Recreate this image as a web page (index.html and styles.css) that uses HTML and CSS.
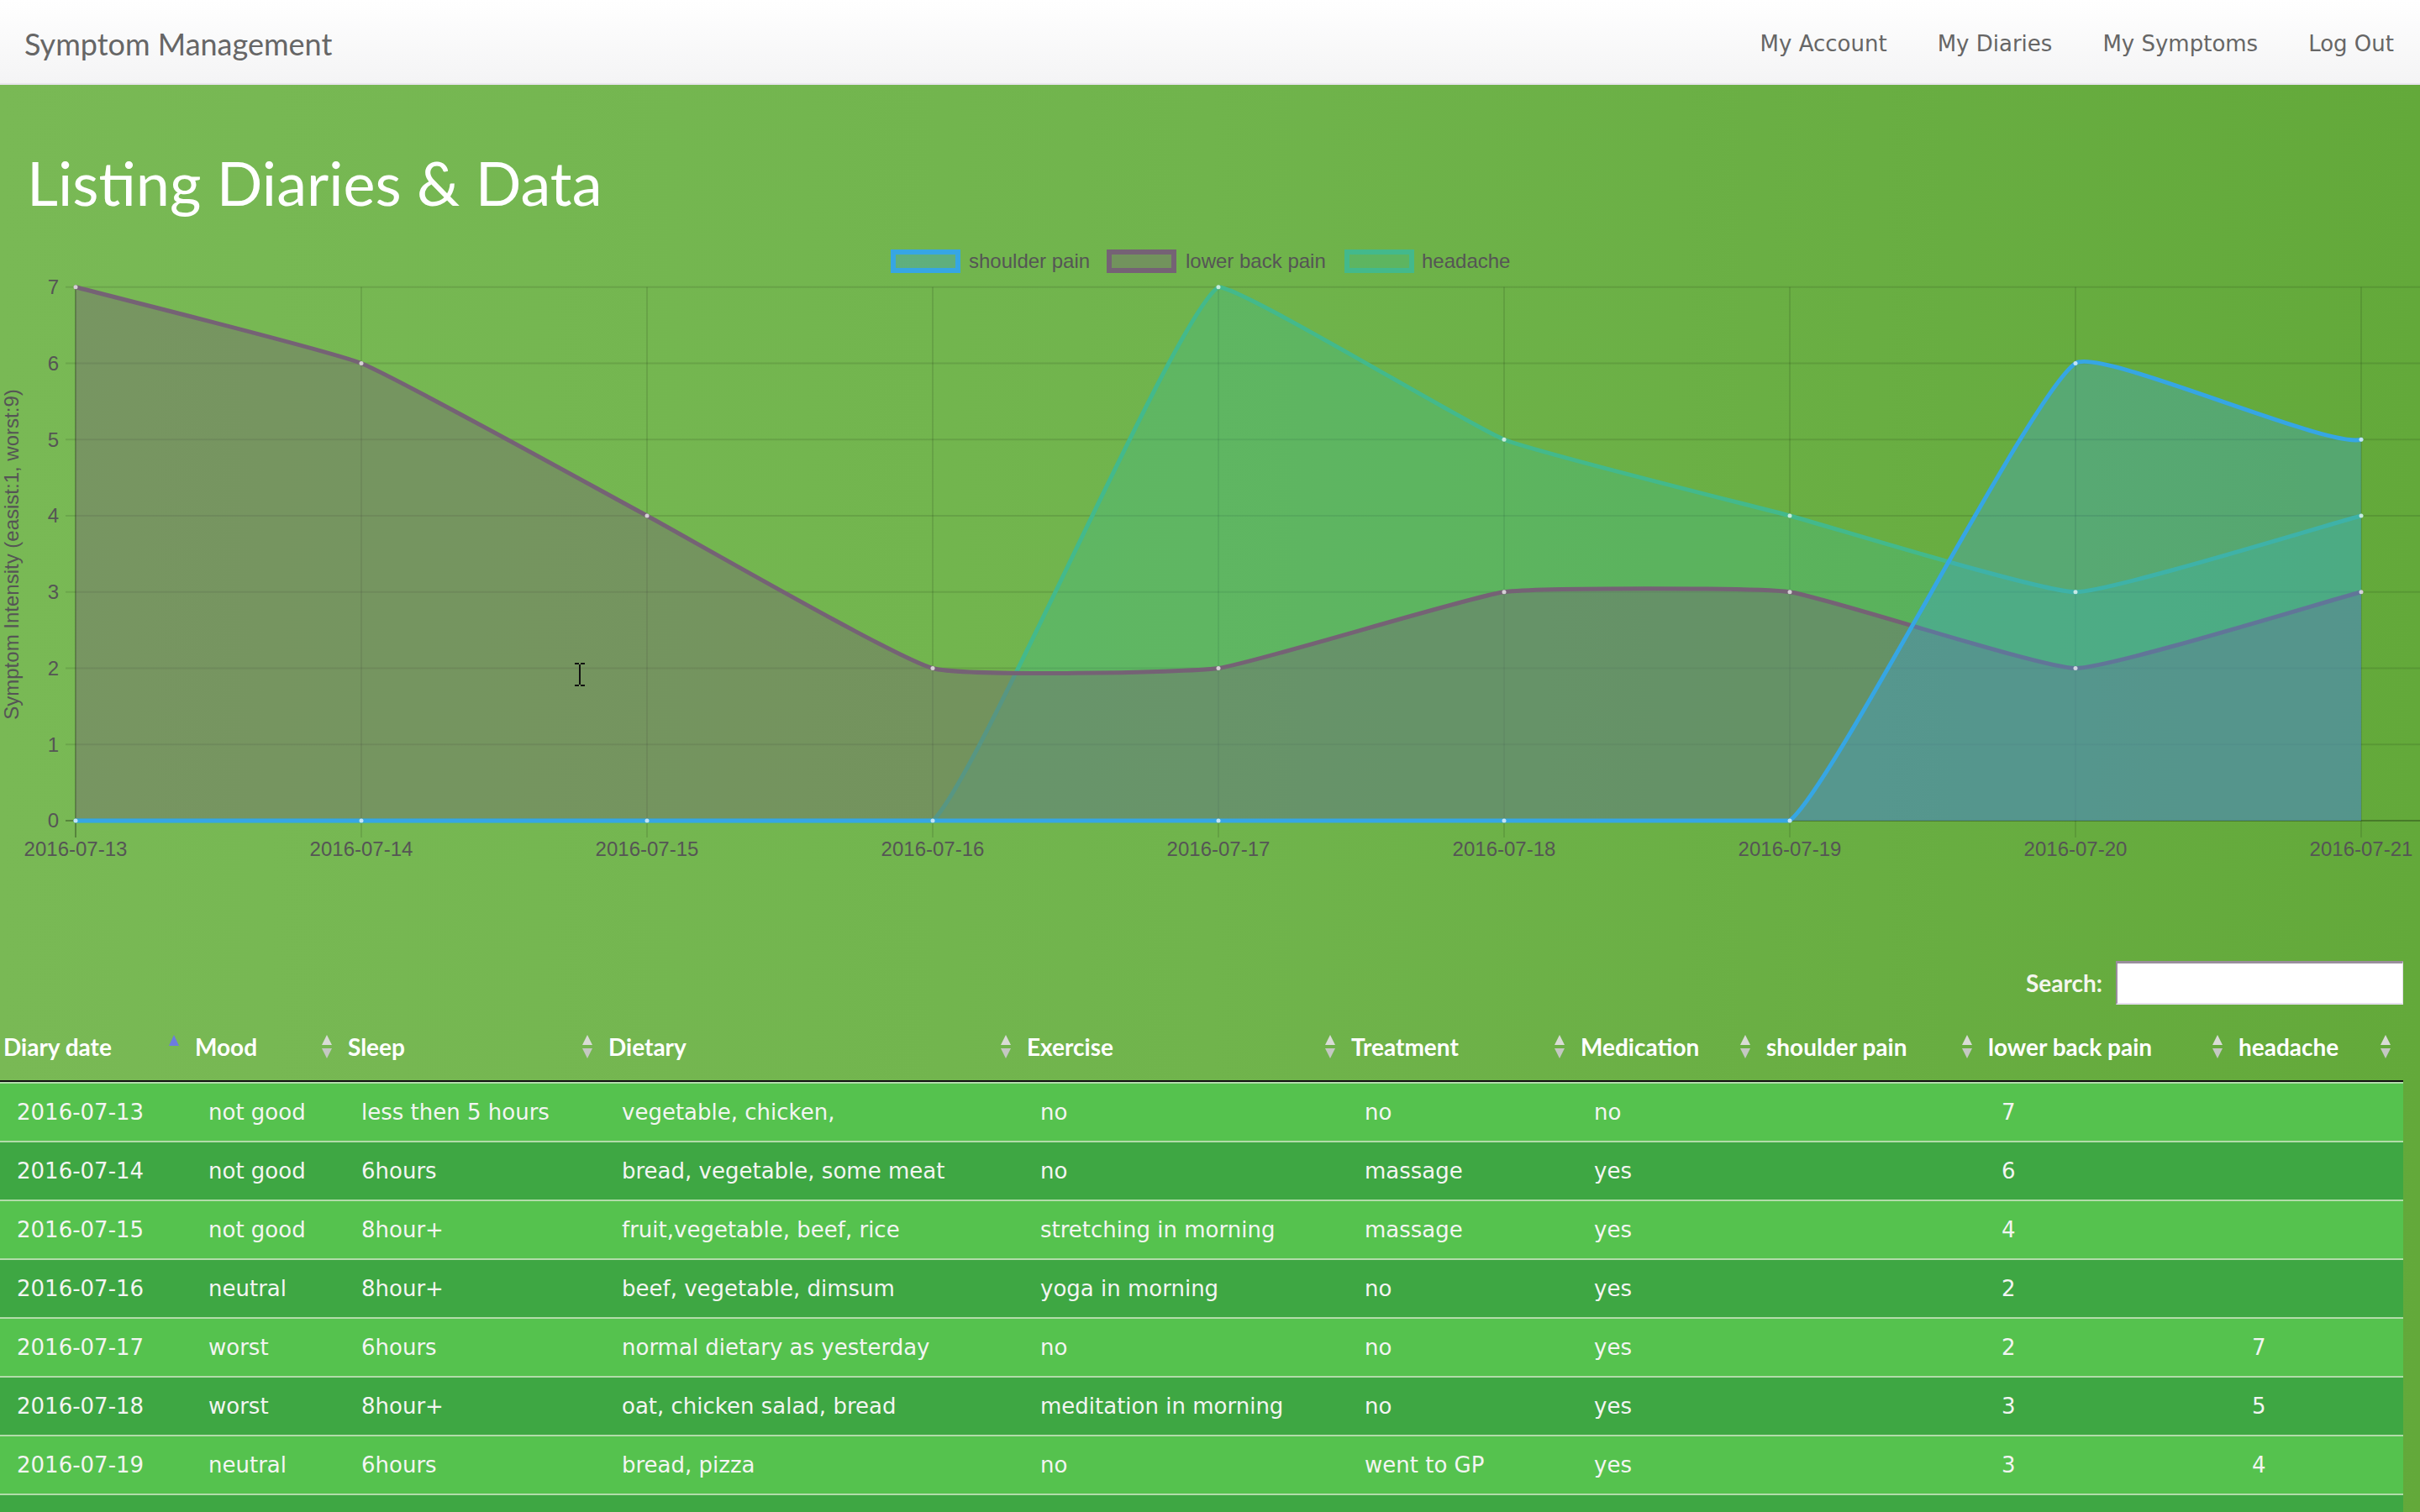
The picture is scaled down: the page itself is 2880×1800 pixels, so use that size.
FILE: index.html
```html
<!DOCTYPE html>
<html lang="en">
<head>
<meta charset="utf-8">
<title>Symptom Management</title>
<link rel="stylesheet" href="styles.css">
</head>
<body>
<nav class="navbar">
  <div class="brand">Symptom Management</div>
  <ul class="nav-links">
    <li>My Account</li>
    <li>My Diaries</li>
    <li>My Symptoms</li>
    <li>Log Out</li>
  </ul>
</nav>
<main class="page">
  <h1 class="title">Listing Diaries &amp; Data</h1>

  <svg class="chart" width="2880" height="823" viewBox="0 257 2880 823" xmlns="http://www.w3.org/2000/svg">
    <!-- legend -->
    <g class="legend">
      <rect x="1063" y="300" width="77" height="22" fill="rgba(54,162,235,0.3)" stroke="#36a6e4" stroke-width="6"/>
      <text x="1153" y="319">shoulder pain</text>
      <rect x="1320" y="300" width="77" height="22" fill="rgba(117,98,117,0.4)" stroke="#756275" stroke-width="6"/>
      <text x="1411" y="319">lower back pain</text>
      <rect x="1603" y="300" width="77" height="22" fill="rgba(64,187,140,0.35)" stroke="#43b98c" stroke-width="6"/>
      <text x="1692" y="319">headache</text>
    </g>
    <!-- grid -->
    <g class="grid">
      <line x1="78" y1="341.75" x2="2880" y2="341.75"/>
      <line x1="78" y1="432.5" x2="2880" y2="432.5"/>
      <line x1="78" y1="523.25" x2="2880" y2="523.25"/>
      <line x1="78" y1="614" x2="2880" y2="614"/>
      <line x1="78" y1="704.75" x2="2880" y2="704.75"/>
      <line x1="78" y1="795.5" x2="2880" y2="795.5"/>
      <line x1="78" y1="886.25" x2="2880" y2="886.25"/>
      <line x1="430" y1="341.75" x2="430" y2="997"/>
      <line x1="770" y1="341.75" x2="770" y2="997"/>
      <line x1="1110" y1="341.75" x2="1110" y2="997"/>
      <line x1="1450" y1="341.75" x2="1450" y2="997"/>
      <line x1="1790" y1="341.75" x2="1790" y2="997"/>
      <line x1="2130" y1="341.75" x2="2130" y2="997"/>
      <line x1="2470" y1="341.75" x2="2470" y2="997"/>
      <line x1="2810" y1="341.75" x2="2810" y2="997"/>
    </g>
    <g class="axis">
      <line x1="78" y1="977" x2="2880" y2="977"/>
      <line x1="90" y1="341.75" x2="90" y2="997"/>
    </g>
    <!-- y ticks -->
    <g class="yticks">
      <text x="70" y="350">7</text>
      <text x="70" y="441">6</text>
      <text x="70" y="532">5</text>
      <text x="70" y="622">4</text>
      <text x="70" y="713">3</text>
      <text x="70" y="804">2</text>
      <text x="70" y="895">1</text>
      <text x="70" y="985">0</text>
    </g>
    <text class="ytitle" transform="translate(22,660) rotate(-90)">Symptom Intensity (easist:1, worst:9)</text>
    <!-- x ticks -->
    <g class="xticks">
      <text x="90" y="1019">2016-07-13</text>
      <text x="430" y="1019">2016-07-14</text>
      <text x="770" y="1019">2016-07-15</text>
      <text x="1110" y="1019">2016-07-16</text>
      <text x="1450" y="1019">2016-07-17</text>
      <text x="1790" y="1019">2016-07-18</text>
      <text x="2130" y="1019">2016-07-19</text>
      <text x="2470" y="1019">2016-07-20</text>
      <text x="2810" y="1019">2016-07-21</text>
    </g>
    <!-- headache -->
    <path class="fill-headache" d="M90,977 L1110,977 C1165.44,925.19 1396.84,377.21 1450,341.75 C1478.44,341.75 1747.34,506.18 1790,523.25 C1828.94,538.85 2089.2,603.11 2130,614 C2170.8,624.89 2429.2,704.75 2470,704.75 C2510.8,704.75 2769.2,624.89 2810,614 L2810,977 Z"/>
    <path class="line line-headache" d="M90,977 L1110,977 C1165.44,925.19 1396.84,377.21 1450,341.75 C1478.44,341.75 1747.34,506.18 1790,523.25 C1828.94,538.85 2089.2,603.11 2130,614 C2170.8,624.89 2429.2,704.75 2470,704.75 C2510.8,704.75 2769.2,624.89 2810,614"/>
    <!-- lower back pain -->
    <path class="fill-back" d="M90,341.75 C130.8,352.64 391.06,416.91 430,432.5 C472.66,449.57 729.2,592.22 770,614 C810.8,635.78 1066.65,783.93 1110,795.5 C1148.25,805.71 1409.89,800.85 1450,795.5 C1491.49,789.96 1748.51,710.29 1790,704.75 C1830.11,699.4 2089.89,699.4 2130,704.75 C2171.49,710.29 2429.2,795.5 2470,795.5 C2510.8,795.5 2769.2,715.64 2810,704.75 L2810,977 L90,977 Z"/>
    <path class="line line-back" d="M90,341.75 C130.8,352.64 391.06,416.91 430,432.5 C472.66,449.57 729.2,592.22 770,614 C810.8,635.78 1066.65,783.93 1110,795.5 C1148.25,805.71 1409.89,800.85 1450,795.5 C1491.49,789.96 1748.51,710.29 1790,704.75 C1830.11,699.4 2089.89,699.4 2130,704.75 C2171.49,710.29 2429.2,795.5 2470,795.5 C2510.8,795.5 2769.2,715.64 2810,704.75"/>
    <!-- shoulder pain -->
    <path class="fill-shoulder" d="M90,977 L2130,977 C2183.34,934.28 2417.29,467.66 2470,432.5 C2498.89,413.21 2769.2,534.14 2810,523.25 L2810,977 Z"/>
    <path class="line line-shoulder" d="M90,977 L2130,977 C2183.34,934.28 2417.29,467.66 2470,432.5 C2498.89,413.21 2769.2,534.14 2810,523.25"/>
    <!-- points -->
    <g class="points">
      <circle cx="1450" cy="341.75" r="2.5"/><circle cx="1790" cy="523.25" r="2.5"/><circle cx="2130" cy="614" r="2.5"/><circle cx="2470" cy="704.75" r="2.5"/><circle cx="2810" cy="614" r="2.5"/>
      <circle cx="90" cy="341.75" r="2.5"/><circle cx="430" cy="432.5" r="2.5"/><circle cx="770" cy="614" r="2.5"/><circle cx="1110" cy="795.5" r="2.5"/><circle cx="1450" cy="795.5" r="2.5"/><circle cx="1790" cy="704.75" r="2.5"/><circle cx="2130" cy="704.75" r="2.5"/><circle cx="2470" cy="795.5" r="2.5"/><circle cx="2810" cy="704.75" r="2.5"/>
      <circle cx="90" cy="977" r="2.5"/><circle cx="430" cy="977" r="2.5"/><circle cx="770" cy="977" r="2.5"/><circle cx="1110" cy="977" r="2.5"/><circle cx="1450" cy="977" r="2.5"/><circle cx="1790" cy="977" r="2.5"/><circle cx="2130" cy="977" r="2.5"/><circle cx="2470" cy="432.5" r="2.5"/><circle cx="2810" cy="523.25" r="2.5"/>
    </g>
    <!-- mouse cursor (I-beam) -->
    <path class="cursor" d="M684,790 H689 M691,790 H696 M690,791 V815 M684,816 H689 M691,816 H696"/>
  </svg>

  <div class="filter">
    <label for="search">Search:</label>
    <input id="search" type="search">
  </div>

  <table class="diary">
    <colgroup>
      <col class="c-date"><col class="c-mood"><col class="c-sleep"><col class="c-diet"><col class="c-ex"><col class="c-treat"><col class="c-med"><col class="c-sh"><col class="c-back"><col class="c-head">
    </colgroup>
    <thead>
      <tr>
        <th><div class="th-in"><span>Diary date</span><svg class="sort" viewBox="0 0 14 30"><path class="asc" d="M7,1 L13,14 L1,14 Z"/></svg></div></th>
        <th><div class="th-in"><span>Mood</span><svg class="sort" viewBox="0 0 14 30"><path class="up" d="M7,1 L13,13 L1,13 Z"/><path class="down" d="M1,17 L13,17 L7,29 Z"/></svg></div></th>
        <th><div class="th-in"><span>Sleep</span><svg class="sort" viewBox="0 0 14 30"><path class="up" d="M7,1 L13,13 L1,13 Z"/><path class="down" d="M1,17 L13,17 L7,29 Z"/></svg></div></th>
        <th><div class="th-in"><span>Dietary</span><svg class="sort" viewBox="0 0 14 30"><path class="up" d="M7,1 L13,13 L1,13 Z"/><path class="down" d="M1,17 L13,17 L7,29 Z"/></svg></div></th>
        <th><div class="th-in"><span>Exercise</span><svg class="sort" viewBox="0 0 14 30"><path class="up" d="M7,1 L13,13 L1,13 Z"/><path class="down" d="M1,17 L13,17 L7,29 Z"/></svg></div></th>
        <th><div class="th-in"><span>Treatment</span><svg class="sort" viewBox="0 0 14 30"><path class="up" d="M7,1 L13,13 L1,13 Z"/><path class="down" d="M1,17 L13,17 L7,29 Z"/></svg></div></th>
        <th><div class="th-in"><span>Medication</span><svg class="sort" viewBox="0 0 14 30"><path class="up" d="M7,1 L13,13 L1,13 Z"/><path class="down" d="M1,17 L13,17 L7,29 Z"/></svg></div></th>
        <th><div class="th-in"><span>shoulder pain</span><svg class="sort" viewBox="0 0 14 30"><path class="up" d="M7,1 L13,13 L1,13 Z"/><path class="down" d="M1,17 L13,17 L7,29 Z"/></svg></div></th>
        <th><div class="th-in"><span>lower back pain</span><svg class="sort" viewBox="0 0 14 30"><path class="up" d="M7,1 L13,13 L1,13 Z"/><path class="down" d="M1,17 L13,17 L7,29 Z"/></svg></div></th>
        <th><div class="th-in"><span>headache</span><svg class="sort" viewBox="0 0 14 30"><path class="up" d="M7,1 L13,13 L1,13 Z"/><path class="down" d="M1,17 L13,17 L7,29 Z"/></svg></div></th>
      </tr>
    </thead>
    <tbody>
      <tr><td>2016-07-13</td><td>not good</td><td>less then 5 hours</td><td>vegetable, chicken,</td><td>no</td><td>no</td><td>no</td><td></td><td>7</td><td></td></tr>
      <tr><td>2016-07-14</td><td>not good</td><td>6hours</td><td>bread, vegetable, some meat</td><td>no</td><td>massage</td><td>yes</td><td></td><td>6</td><td></td></tr>
      <tr><td>2016-07-15</td><td>not good</td><td>8hour+</td><td>fruit,vegetable, beef, rice</td><td>stretching in morning</td><td>massage</td><td>yes</td><td></td><td>4</td><td></td></tr>
      <tr><td>2016-07-16</td><td>neutral</td><td>8hour+</td><td>beef, vegetable, dimsum</td><td>yoga in morning</td><td>no</td><td>yes</td><td></td><td>2</td><td></td></tr>
      <tr><td>2016-07-17</td><td>worst</td><td>6hours</td><td>normal dietary as yesterday</td><td>no</td><td>no</td><td>yes</td><td></td><td>2</td><td>7</td></tr>
      <tr><td>2016-07-18</td><td>worst</td><td>8hour+</td><td>oat, chicken salad, bread</td><td>meditation in morning</td><td>no</td><td>yes</td><td></td><td>3</td><td>5</td></tr>
      <tr><td>2016-07-19</td><td>neutral</td><td>6hours</td><td>bread, pizza</td><td>no</td><td>went to GP</td><td>yes</td><td></td><td>3</td><td>4</td></tr>
      <tr class="row-partial"><td></td><td></td><td></td><td></td><td></td><td></td><td></td><td></td><td></td><td></td></tr>
    </tbody>
  </table>
</main>
</body>
</html>
```

FILE: styles.css
```css
* { box-sizing: border-box; }

html, body {
  margin: 0;
  padding: 0;
}

body {
  min-height: 1800px;
  overflow: hidden;
  font-family: "DejaVu Sans", Verdana, sans-serif;
  background: linear-gradient(90deg, #79b955 0%, #70b44c 50%, #63a93a 100%);
}

/* ---------- navbar ---------- */
.navbar {
  height: 101px;
  display: flex;
  align-items: center;
  justify-content: space-between;
  padding: 4px 31px 0 29px;
  background: linear-gradient(#ffffff 0%, #f4f4f5 100%);
  border-bottom: 2px solid #e8e5ec;
}

.brand {
  font-family: Lato, "Open Sans", sans-serif;
  font-size: 36px;
  color: #666;
}

.nav-links {
  display: flex;
  gap: 60px;
  list-style: none;
  margin: 0;
  padding: 0;
  font-size: 26px;
  color: #666;
}

/* ---------- title ---------- */
.title {
  margin: 76px 0 0;
  padding-left: 32px;
  font-family: Lato, "Open Sans", sans-serif;
  font-weight: 400;
  font-size: 72px;
  line-height: 80px;
  color: #fff;
}

/* ---------- chart ---------- */
.chart {
  display: block;
  font-family: "Liberation Sans", Arial, sans-serif;
  font-size: 24px;
}

.chart text { fill: #555; }

.grid line {
  stroke: rgba(0, 0, 0, 0.1);
  stroke-width: 2;
}

.axis line {
  stroke: rgba(0, 0, 0, 0.28);
  stroke-width: 2;
}

.yticks text { text-anchor: end; }
.xticks text { text-anchor: middle; }
.ytitle { text-anchor: middle; }

.line {
  fill: none;
  stroke-width: 5;
  stroke-linejoin: round;
  stroke-linecap: round;
}

.fill-headache { fill: rgba(64, 187, 140, 0.35); }
.line-headache { stroke: #43b98c; }

.fill-back { fill: rgba(117, 98, 117, 0.4); }
.line-back { stroke: #756275; }

.fill-shoulder { fill: rgba(54, 162, 235, 0.3); }
.line-shoulder { stroke: #36a6e4; }

.points circle { fill: rgba(255, 255, 255, 0.7); }

.cursor {
  fill: none;
  stroke: #111;
  stroke-width: 2;
}

/* ---------- search ---------- */
.filter {
  display: flex;
  justify-content: flex-end;
  align-items: center;
  gap: 16px;
  height: 52px;
  margin-top: 64px;
  padding-right: 20px;
}

.filter label {
  font-family: Lato, "Open Sans", sans-serif;
  font-weight: 700;
  font-size: 28px;
  color: #f4f6ee;
}

.filter input {
  width: 342px;
  height: 52px;
  margin: 0;
  background: #fff;
  border-style: solid;
  border-width: 3px 1px 2px 2px;
  border-color: #998e9c #e4e0e8 #e6dfee #998e9c;
}

/* ---------- table ---------- */
.diary {
  margin-top: 10px;
  width: 2860px;
  table-layout: fixed;
  border-collapse: separate;
  border-spacing: 0;
}

.c-date { width: 228px; }
.c-mood { width: 182px; }
.c-sleep { width: 310px; }
.c-diet { width: 498px; }
.c-ex { width: 386px; }
.c-treat { width: 273px; }
.c-med { width: 221px; }
.c-sh { width: 264px; }
.c-back { width: 298px; }
.c-head { width: 200px; }

.diary th {
  padding: 0;
  text-align: left;
  border-bottom: 2px solid #111;
  font-family: Lato, "Open Sans", sans-serif;
  font-weight: 700;
  font-size: 28px;
  color: #fff;
}

.th-in {
  height: 80px;
  display: flex;
  align-items: center;
  justify-content: space-between;
  padding: 0 14px 0 4px;
  white-space: nowrap;
}

.sort {
  width: 14px;
  height: 30px;
  flex: none;
}

.sort .up { fill: #d9dcd6; }
.sort .down { fill: #c4c8c2; }
.sort .asc { fill: #6c7be0; }

.diary td {
  padding: 0 20px;
  line-height: 68px;
  height: 70px;
  border-top: 2px solid #b2dcaa;
  font-size: 26px;
  color: #f3f5f2;
  white-space: nowrap;
  overflow: hidden;
}

.diary tbody tr:nth-child(odd) td { background: #55c24e; }
.diary tbody tr:nth-child(even) td { background: #3ea743; }
```
